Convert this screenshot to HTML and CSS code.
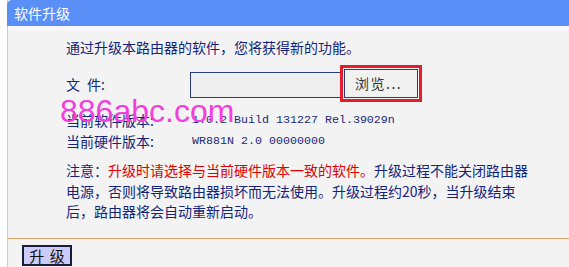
FILE: index.html
```html
<!DOCTYPE html>
<html lang="zh">
<head>
<meta charset="utf-8">
<title>软件升级</title>
<link rel="stylesheet" href="styles.css">
</head>
<body>
<div class="panel">
  <div class="head">软件升级</div>
  <div class="content">
    <p class="intro">通过升级本路由器的软件，您将获得新的功能。</p>
    <div class="file-row">
      <span class="label">文<span class="gap"></span>件:</span>
      <span class="input"></span>
      <span class="browse-wrap"><span class="browse">浏览...</span></span>
    </div>
    <div class="info">
      <span class="label">当前软件版本:</span><span class="value">1.0.2 Build 131227 Rel.39029n</span>
      <span class="label">当前硬件版本:</span><span class="value">WR881N 2.0 00000000</span>
    </div>
    <p class="notice">注意：<span class="warn">升级时请选择与当前硬件版本一致的软件。</span>升级过程不能关闭路由器<br>电源，否则将导致路由器损坏而无法使用。升级过程约20秒，当升级结束<br>后，路由器将会自动重新启动。</p>
    <div class="watermark">886abc.com</div>
  </div>
  <div class="foot">
    <span class="upgrade">升 级</span>
  </div>
</div>
</body>
</html>
```

FILE: styles.css
```css
html, body {
  margin: 0;
  padding: 0;
  background: #ffffff;
  width: 569px;
  height: 267px;
  overflow: hidden;
}
body {
  font-family: "Noto Sans CJK SC", "Liberation Sans", sans-serif;
  font-size: 14px;
  color: #14247a;
}
.panel {
  margin-left: 7px;
  background: #f3f3f3;
  height: 267px;
  border-left: 1px solid #efc48e;
}
.head {
  height: 26px;
  line-height: 26px;
  background: #5a8ff8;
  color: #ffffff;
  padding-left: 7px;
  border-top-left-radius: 5px;
  margin-left: -1px;
  font-size: 14px;
}
.content {
  position: relative;
  border-top: 4px solid #f8f5fb;
  padding: 7px 0 0 58px;
  height: 201px;
}
.intro {
  margin: 0;
  line-height: 20px;
}
.file-row {
  display: flex;
  align-items: center;
  margin-top: 9px;
  height: 35px;
}
.file-row .label {
  width: 124px;
}
.gap {
  display: inline-block;
  width: 7px;
}
.input {
  width: 151px;
  height: 24px;
  border: 1px solid #2a3a80;
  background: #eeeeee;
  margin-top: 2px;
}
.browse-wrap {
  margin-left: -3px;
  border: 3px solid #e31e2a;
  padding: 1px;
  display: flex;
}
.browse {
  box-sizing: border-box;
  width: 74px;
  height: 29px;
  border: 1px solid #2a3a80;
  background: #f1f1f1;
  color: #333333;
  line-height: 27px;
  padding-left: 10px;
  letter-spacing: 1.5px;
}
.info {
  display: grid;
  grid-template-columns: 126px auto;
  grid-auto-rows: 21px;
  align-items: center;
  margin-top: 8px;
}
.value {
  font-family: "Liberation Mono", monospace;
  font-size: 11.67px;
  color: #1c2a78;
}
.notice {
  margin: 9px 0 0 0;
  line-height: 20.5px;
}
.warn {
  color: #e00000;
}
.watermark {
  position: absolute;
  left: 52px;
  top: 65px;
  font-family: "Liberation Sans", Arial, sans-serif;
  font-size: 32px;
  line-height: 32px;
  color: #f23fdc;
}
.foot {
  border-top: 1px solid #dca46a;
  padding: 6px 0 0 14px;
}
.upgrade {
  display: inline-block;
  box-sizing: border-box;
  width: 50px;
  height: 21px;
  line-height: 17px;
  border: 2px solid #1a1a3a;
  background: #ccccfa;
  color: #111111;
  font-size: 15px;
  text-align: center;
  word-spacing: 2px;
}
```
